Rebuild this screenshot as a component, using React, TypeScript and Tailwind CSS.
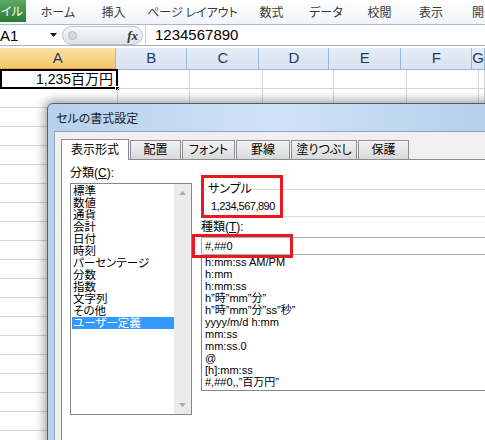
import React from "react";

// Excel 2010 sheet with the "セルの書式設定" dialog open on top
const colWidths = ["w-[118px]", "w-[72px]", "w-[73px]", "w-[71px]", "w-[73px]", "w-[72px]", "flex-1"];
const colNames = ["A", "B", "C", "D", "E", "F", "G"];

const categories = [
  "標準",
  "数値",
  "通貨",
  "会計",
  "日付",
  "時刻",
  "パーセンテージ",
  "分数",
  "指数",
  "文字列",
  "その他",
  "ユーザー定義",
];

const formats = [
  "h:mm:ss AM/PM",
  "h:mm",
  "h:mm:ss",
  "h\u201d時\u201dmm\u201d分\u201d",
  "h\u201d時\u201dmm\u201d分\u201dss\u201d秒\u201d",
  "yyyy/m/d h:mm",
  "mm:ss",
  "mm:ss.0",
  "@",
  "[h]:mm:ss",
  "#,##0,,\u201d百万円\u201d",
];

const tabs = [
  { label: "配置", w: "w-[51px]" },
  { label: "フォント", w: "w-[53px]" },
  { label: "罫線", w: "w-[54px]" },
  { label: "塗りつぶし", w: "w-[66px]" },
  { label: "保護", w: "w-[51px]" },
];

const ribbonTabs = [
  { label: "ホーム", w: "w-[64px]" },
  { label: "挿入", w: "w-[47px]" },
  { label: "ページ レイアウト", w: "w-[111px]" },
  { label: "数式", w: "w-[47px]" },
  { label: "データ", w: "w-[62px]" },
  { label: "校閲", w: "w-[45px]" },
  { label: "表示", w: "w-[58px]" },
];

export default function App() {
  return (
    <div className="relative w-[485px] h-[440px] overflow-hidden bg-white font-['Liberation_Sans','Noto_Sans_CJK_JP',sans-serif] text-black">
      {/* ribbon tabs */}
      <div className="flex h-[25px] overflow-hidden whitespace-nowrap border-b border-[#a7b7cc] bg-gradient-to-b from-white to-[#f0f4fa] text-[12px] text-[#3a3a3a] font-['Noto_Sans_CJK_JP',sans-serif] [font-feature-settings:'palt']">
        <div className="shrink-0 w-[26px] h-[22px] flex items-center pl-[1px] text-white bg-gradient-to-b from-[#5ea862] to-[#2a7a34]">
          イル
        </div>
        {ribbonTabs.map((t) => (
          <div key={t.label} className={`${t.w} shrink-0 flex items-center justify-center`}>
            {t.label}
          </div>
        ))}
        <div className="shrink-0 flex items-center pl-[12px]">開発</div>
      </div>

      {/* formula bar */}
      <div className="flex items-center h-[21px] border-b border-[#a9b3c0]">
        <div className="w-[62px] h-full flex items-center justify-between pr-[5px]">
          <span className="text-[15px] leading-none">A1</span>
          <svg width="7" height="4" viewBox="0 0 7 4">
            <polygon points="0,0 7,0 3.5,4" fill="#111" />
          </svg>
        </div>
        <div className="w-[81px] h-[19px] rounded-full border border-[#b9c1cc] bg-gradient-to-b from-[#f6f8fa] to-[#dde2e9] flex items-center justify-between pl-[5px] pr-[4px]">
          <div className="w-[9px] h-[9px] rounded-full border border-[#b5bcc5] bg-[#d6dbe1]" />
          <span className="font-['Liberation_Serif',serif] italic font-bold text-[13px] leading-none text-[#333]">
            fx
          </span>
        </div>
        <div className="flex-1 h-full flex items-center pl-[9px] text-[15px] ml-[2px] border-l border-[#c9d0d8]">
          1234567890
        </div>
      </div>

      {/* column headers */}
      <div className="flex h-[22px] mt-[2px] text-[15px] text-[#1f3c66]">
        {colNames.map((c, i) => (
          <div
            key={c}
            className={`${colWidths[i]} flex items-center justify-center border-r ${
              i === 0
                ? "bg-gradient-to-b from-[#fbe2a6] to-[#f5c766] border-b-2 border-b-[#f29a38] border-r-[#e0b15c]"
                : "bg-gradient-to-b from-[#e4ecf7] to-[#d8e3f1] border-b border-[#9eb6ce]"
            }`}
          >
            {c}
          </div>
        ))}
      </div>

      {/* grid rows */}
      {Array.from({ length: 20 }).map((_, r) => (
        <div key={r} className="flex h-[19px]">
          {colWidths.map((w, i) => (
            <div key={i} className={`${w} relative border-r border-b border-[#d6d6d6]`}>
              {r === 0 && i === 0 && (
                <>
                  <div className="h-full flex items-center justify-end pr-[4px] text-[14px] leading-none">
                    1,235百万円
                  </div>
                  <div className="absolute -top-[1px] left-0 -right-[1px] -bottom-[1px] border-2 border-black" />
                  <div className="absolute -right-[3px] -bottom-[3px] w-[5px] h-[5px] bg-black border border-white" />
                </>
              )}
            </div>
          ))}
        </div>
      ))}

      {/* dialog */}
      <div className="absolute left-[47px] top-[103px] w-[460px] h-[360px] flex flex-col rounded-tl-[6px] border border-[#4d6076] bg-gradient-to-r from-[#b7d0ec] via-[#cfe3f8] to-[#b3cdea] pl-[6px] shadow-[0_0_10px_3px_rgba(0,0,0,0.35)] font-['Liberation_Sans','Noto_Sans_CJK_JP',sans-serif] [font-feature-settings:'palt']">
        <div className="h-[27px] flex items-center pl-[2px] text-[12px] text-[#1a1a1a] font-['Noto_Sans_CJK_JP',sans-serif]">
          セルの書式設定
        </div>
        <div className="flex-1 flex flex-col bg-[#f0f0f0] border-l border-t border-[#8ea3bd] pl-[6px] pt-[7px]">
          {/* tab strip */}
          <div className="flex items-end h-[20px] text-[12px] leading-none">
            <div className="relative z-10 w-[68px] h-[21px] -mb-[1px] flex items-center justify-center bg-white border-l border-t border-r border-[#898c95]">
              表示形式
            </div>
            {tabs.map((t) => (
              <div
                key={t.label}
                className={`${t.w} ml-[1px] h-[19px] flex items-center justify-center border-l border-t border-r border-[#8e9095] bg-gradient-to-b from-[#f3f3f3] to-[#d9d9d9]`}
              >
                {t.label}
              </div>
            ))}
          </div>

          {/* tab panel */}
          <div className="flex-1 flex bg-white border-l border-t border-[#898c95] pt-[7px] pl-[8px]">
            {/* category list */}
            <div className="w-[122px] flex flex-col">
              <div className="h-[12px] text-[12px] leading-[12px]">
                分類(<span className="underline">C</span>):
              </div>
              <div className="mt-[4px] h-[232px] flex border border-[#828790]">
                <div className="flex-1 pt-[1px] pl-[1px]">
                  {categories.map((c, i) => (
                    <div
                      key={c}
                      className={`h-[12px] text-[11.5px] leading-[12px] pl-[1px] whitespace-nowrap ${
                        i === categories.length - 1 ? "bg-[#3399ff] text-white" : ""
                      }`}
                    >
                      {c}
                    </div>
                  ))}
                </div>
                <div className="w-[17px] bg-[#ebebeb] flex flex-col items-center justify-between py-[7px]">
                  <svg width="7" height="4" viewBox="0 0 7 4">
                    <polygon points="0,4 7,4 3.5,0" fill="#a9a9a9" />
                  </svg>
                  <svg width="7" height="4" viewBox="0 0 7 4">
                    <polygon points="0,0 7,0 3.5,4" fill="#a9a9a9" />
                  </svg>
                </div>
              </div>
            </div>

            {/* right side */}
            <div className="flex-1 flex flex-col ml-[9px]">
              <div className="relative mt-[22px] ml-[2px] h-[28px] border border-[#d5dfe5] pl-[7px] pt-[10px]">
                <div className="absolute left-[3px] -top-[7px] bg-white px-[1px] text-[12px] leading-[12px]">
                  サンプル
                </div>
                <div className="text-[11px] leading-[12px] tracking-[-0.5px]">1,234,567,890</div>
              </div>
              <div className="mt-[4px] h-[12px] text-[12px] leading-[12px]">
                種類(<span className="underline">T</span>):
              </div>
              <div className="mt-[4px] h-[18px] flex items-center pl-[3px] border-l border-t border-b border-[#abadb3] text-[11px]">
                #,##0
              </div>
              <div className="h-[136px] pt-[1px] pl-[3px] border-l border-b border-[#828790]">
                {formats.map((f) => (
                  <div key={f} className="h-[12px] text-[11px] leading-[12px] whitespace-nowrap">
                    {f}
                  </div>
                ))}
              </div>
            </div>
          </div>
        </div>
      </div>

      {/* red annotation boxes */}
      <div className="absolute left-[201px] top-[175px] w-[82px] h-[43px] border-[3px] border-[#e8191f]" />
      <div className="absolute left-[192px] top-[234px] w-[101px] h-[24px] border-[3px] border-[#e8191f]" />
    </div>
  );
}
